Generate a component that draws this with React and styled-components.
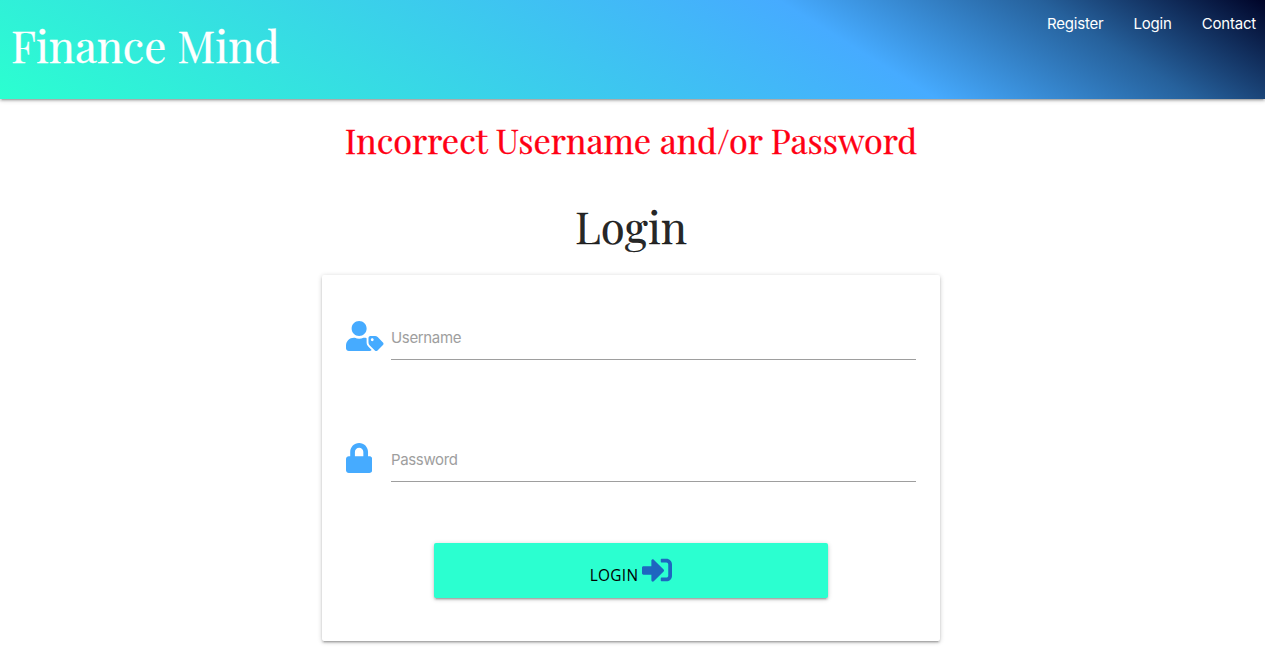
import React from 'react';
import styled, { createGlobalStyle } from 'styled-components';
import { FaUserTag, FaLock, FaSignInAlt } from 'react-icons/fa';

const GlobalStyle = createGlobalStyle`
  *, *::before, *::after { box-sizing: border-box; }
  body {
    margin: 0;
    min-height: 100vh;
    background: #fff;
    color: rgba(0, 0, 0, 0.87);
    font-family: Inter, "Liberation Sans", sans-serif;
  }
`;

const raised = '0 2px 2px 0 rgba(0,0,0,.14), 0 3px 1px -2px rgba(0,0,0,.12), 0 1px 5px 0 rgba(0,0,0,.2)';
const serif = '"Playfair Display", "Liberation Serif", serif';

const Header = styled.header`
  display: flex;
  justify-content: space-between;
  align-items: flex-start;
  height: 99px;
  padding: 0 9px 0 11px;
  background: linear-gradient(32deg, #2bffd0 0%, #46abff 65.8%, #26619c 84%, #000428 100%);
  box-shadow: ${raised};
`;

const Brand = styled.a`
  font: 400 43.8px/60px ${serif};
  padding-top: 15px;
  color: #fff;
  white-space: nowrap;
  -webkit-text-stroke: 0.3px currentColor;
`;

const Nav = styled.nav`
  display: flex;
  gap: 30px;
`;

const NavLink = styled.a`
  font-size: 15px;
  line-height: 48px;
  letter-spacing: -0.2px;
  color: #fff;
`;

const Main = styled.main`
  display: flex;
  flex-direction: column;
  align-items: center;
  width: 1262px;
  min-height: 554px;
`;

const ErrorTitle = styled.h4`
  margin: 20px 0 0;
  font: 400 34.2px/42px ${serif};
  color: #ff0014;
  white-space: nowrap;
  -webkit-text-stroke: 0.3px currentColor;
`;

const Title = styled.h3`
  margin: 37px 0 0;
  font: 400 43.8px/56px ${serif};
  -webkit-text-stroke: 0.3px currentColor;
`;

const Card = styled.form`
  display: flex;
  flex-direction: column;
  width: 618px;
  height: 366px;
  margin-top: 21px;
  padding: 40px 24px 0;
  border-radius: 2px;
  background: #fff;
  box-shadow: ${raised};
`;

const Field = styled.div`
  display: flex;
  height: 45px;
  margin-bottom: 77px;
`;

const FieldIcon = styled.span`
  width: 45px;
  padding-top: 6px;
  color: #46abff;

  svg {
    display: block;
    width: ${({ $width }) => $width}px;
    height: 30px;
  }
`;

const Label = styled.label`
  flex: 1;
  padding-top: 1px;
  border-bottom: 1px solid #9e9e9e;
  color: #9e9e9e;
  font-size: 15px;
  line-height: 44px;
  letter-spacing: -0.35px;
`;

const Submit = styled.button`
  display: flex;
  align-items: flex-start;
  justify-content: center;
  align-self: center;
  gap: 4px;
  width: 394px;
  height: 54.5px;
  margin-top: -16px;
  padding: 12px 0 0;
  border: 0;
  border-radius: 2px;
  background: #2bffd0;
  box-shadow: ${raised};
  color: #000;
  font: 400 15.4px/41px "Open Sans", "Noto Sans", sans-serif;
  letter-spacing: 0.3px;

  svg {
    width: 30px;
    height: 30px;
    color: #1e66c0;
  }
`;

export default function App() {
  return (
    <>
      <GlobalStyle />
      <Header>
        <Brand>Finance Mind</Brand>
        <Nav>
          <NavLink>Register</NavLink>
          <NavLink>Login</NavLink>
          <NavLink>Contact</NavLink>
        </Nav>
      </Header>
      <Main>
        <ErrorTitle>Incorrect Username and/or Password</ErrorTitle>
        <Title>Login</Title>
        <Card>
          <Field>
            <FieldIcon $width={37.5}><FaUserTag /></FieldIcon>
            <Label>Username</Label>
          </Field>
          <Field>
            <FieldIcon $width={26.25}><FaLock /></FieldIcon>
            <Label>Password</Label>
          </Field>
          <Submit type="button">
            LOGIN
            <FaSignInAlt />
          </Submit>
        </Card>
      </Main>
    </>
  );
}
